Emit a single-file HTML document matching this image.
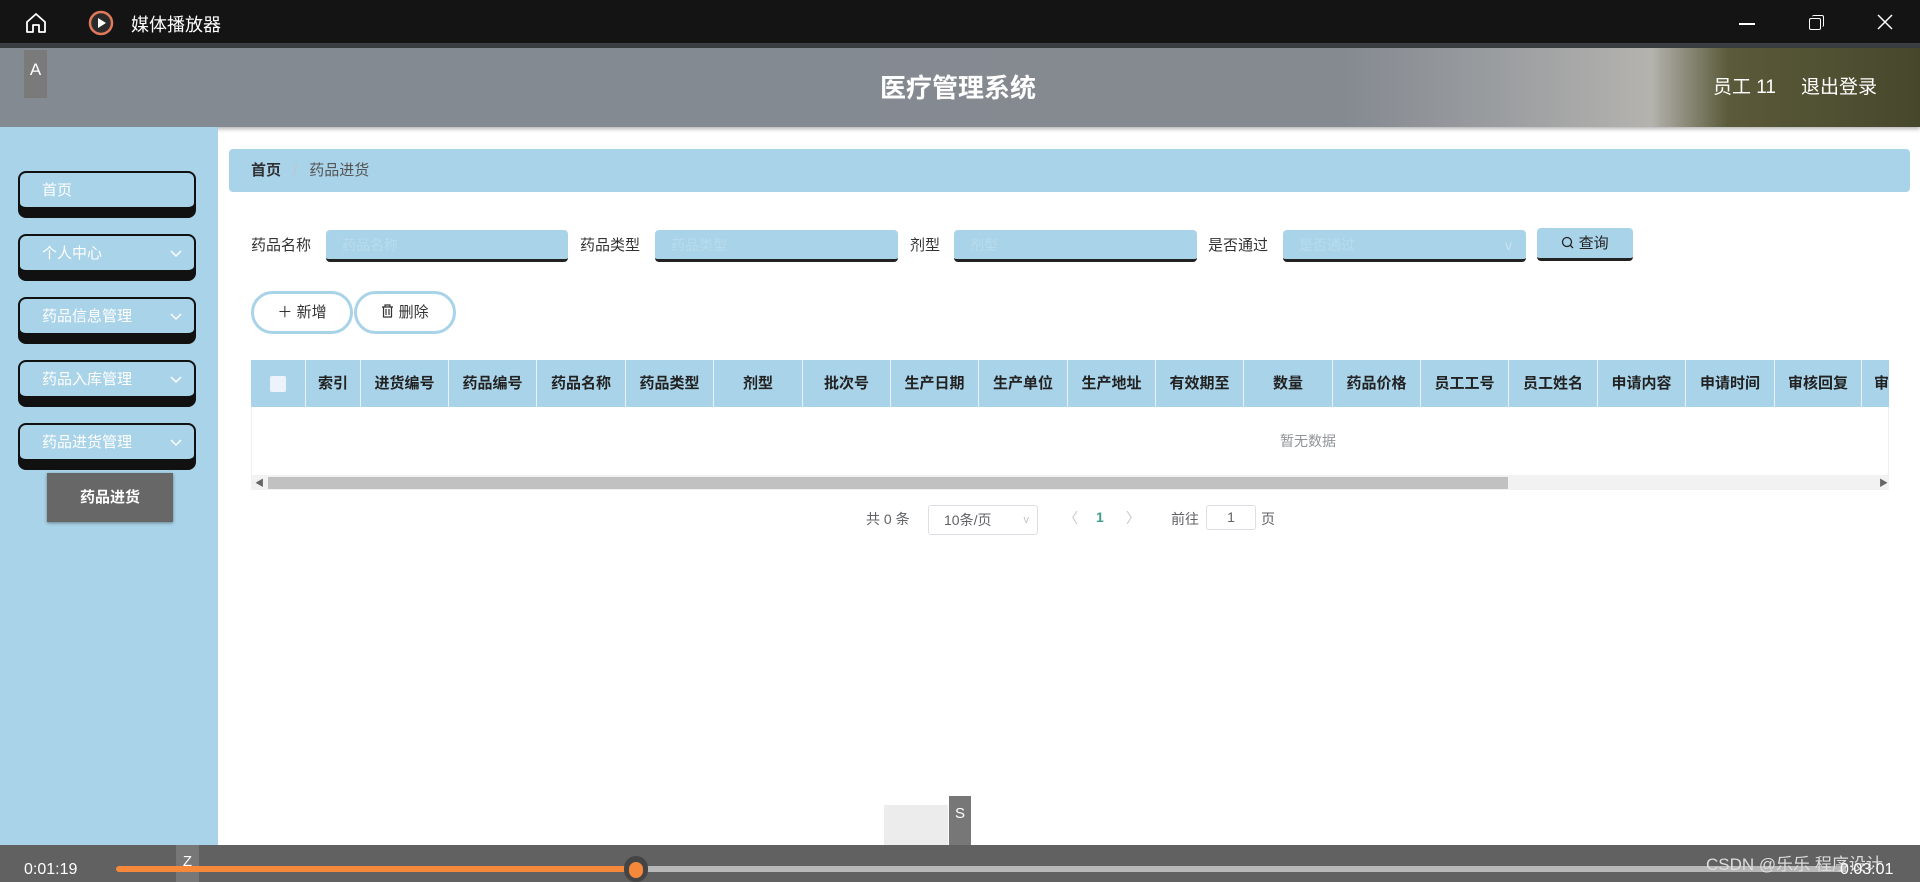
<!DOCTYPE html>
<html><head><meta charset="utf-8">
<style>
*{margin:0;padding:0;box-sizing:border-box}
body{width:1920px;height:882px;overflow:hidden;background:#fff;font-family:"Liberation Sans","Noto Sans CJK SC",sans-serif;position:relative}
.abs{position:absolute}
.tb{left:0;top:0;width:1920px;height:43px;background:#141414;color:#fff}
.strip{left:0;top:43px;width:1920px;height:5px;background:#3b3e42}
.hdr{left:0;top:48px;width:1920px;height:79px;background:linear-gradient(90deg,#848a92 0,#858a91 70%,#9a9da0 78%,#b4b3ae 86%,#5b5a3a 90%,#46482c 100%);box-shadow:0 2px 4px rgba(0,0,0,.3)}
.side{left:0;top:127px;width:218px;height:718px;background:#a9d3e8}
.mi{left:18px;width:178px;height:47px;border:2px solid #111;border-radius:8px;background:#111}
.mi div{height:36px;background:#a9d3e8;border-radius:6px;border-bottom:2px solid #111;color:#fff;font-size:15px;line-height:36px;padding-left:22px;position:relative}
.mi div svg{position:absolute;right:12px;top:14px}
.bc{left:229px;top:149px;width:1681px;height:43px;background:#a9d3e8;border-radius:4px;font-size:15px;line-height:43px;padding-left:22px;color:#555}
.lbl{font-size:15px;color:#333;top:234px}
.inp{top:230px;height:32px;background:#a9d3e8;border-radius:4px;border-bottom:3px solid #222;font-size:14px;color:#b8dcee;line-height:30px;padding-left:16px}
.btn{top:291px;height:43px;border:3px solid #a9d3e8;border-radius:22px;background:#fff;font-size:15px;color:#333;line-height:37px;text-align:center}
.th{top:360px;height:47px;background:#a9d3e8;font-size:15px;font-weight:bold;color:#222;line-height:47px;text-align:center;border-right:1px solid #e8f2f8}
.bar{left:0;top:845px;width:1920px;height:37px;background:#616161}
</style></head><body>
<div class="abs tb">
 <svg class="abs" style="left:24px;top:11px" width="24" height="24" viewBox="0 0 24 24"><path d="M3 11 L12 3 L21 11 V21 H15 V14 H9 V21 H3 Z" fill="none" stroke="#fff" stroke-width="1.8" stroke-linejoin="round"/></svg>
 <svg class="abs" style="left:88px;top:10px" width="26" height="26" viewBox="0 0 26 26"><circle cx="13" cy="13" r="11" fill="#2a2a2a" stroke="#e07a5a" stroke-width="2.5"/><path d="M10 8 L18 13 L10 18Z" fill="#fff"/></svg>
 <div class="abs" style="left:131px;top:11px;font-size:18px">媒体播放器</div>
 <div class="abs" style="left:1739px;top:23px;width:16px;height:1.5px;background:#fff"></div>
 <div class="abs" style="left:1809px;top:18px;width:12px;height:12px;border:1.5px solid #fff;border-radius:2px"></div>
 <div class="abs" style="left:1812px;top:15px;width:12px;height:12px;border-top:1.5px solid #fff;border-right:1.5px solid #fff;border-radius:2px"></div>
 <svg class="abs" style="left:1877px;top:14px" width="16" height="16" viewBox="0 0 16 16"><path d="M1 1L15 15M15 1L1 15" stroke="#fff" stroke-width="1.5"/></svg>
</div>
<div class="abs strip"></div>
<div class="abs hdr">
 <div class="abs" style="left:24px;top:2px;width:23px;height:48px;background:#7a7a7a;color:#fff;font-size:17px;text-align:center;line-height:40px">A</div>
 <div class="abs" style="left:880px;top:20px;font-size:26px;font-weight:bold;color:#fff">医疗管理系统</div>
 <div class="abs" style="left:1713px;top:24px;font-size:19px;color:#fff">员工 11</div>
 <div class="abs" style="left:1801px;top:24px;font-size:19px;color:#fff">退出登录</div>
</div>
<div class="abs side"></div>
<div class="abs mi" style="top:171px"><div>首页</div></div>
<div class="abs mi" style="top:234px"><div>个人中心<svg width="12" height="8" viewBox="0 0 12 8"><path d="M1 1L6 6L11 1" fill="none" stroke="#fff" stroke-width="1.5"/></svg></div></div>
<div class="abs mi" style="top:297px"><div>药品信息管理<svg width="12" height="8" viewBox="0 0 12 8"><path d="M1 1L6 6L11 1" fill="none" stroke="#fff" stroke-width="1.5"/></svg></div></div>
<div class="abs mi" style="top:360px"><div>药品入库管理<svg width="12" height="8" viewBox="0 0 12 8"><path d="M1 1L6 6L11 1" fill="none" stroke="#fff" stroke-width="1.5"/></svg></div></div>
<div class="abs mi" style="top:423px"><div>药品进货管理<svg width="12" height="8" viewBox="0 0 12 8"><path d="M1 1L6 6L11 1" fill="none" stroke="#fff" stroke-width="1.5"/></svg></div></div>
<div class="abs" style="left:47px;top:473px;width:126px;height:49px;background:#676767;color:#fff;font-size:15px;font-weight:bold;text-align:center;line-height:49px;box-shadow:0 1px 3px rgba(0,0,0,.4)">药品进货</div>

<div class="abs bc"><b style="color:#303133">首页</b><span style="color:#c0c4cc;margin:0 12px">/</span>药品进货</div>

<div class="abs lbl" style="left:251px">药品名称</div>
<div class="abs inp" style="left:326px;width:242px">药品名称</div>
<div class="abs lbl" style="left:580px">药品类型</div>
<div class="abs inp" style="left:655px;width:243px">药品类型</div>
<div class="abs lbl" style="left:910px">剂型</div>
<div class="abs inp" style="left:954px;width:243px">剂型</div>
<div class="abs lbl" style="left:1208px">是否通过</div>
<div class="abs inp" style="left:1283px;width:243px">是否通过<span style="position:absolute;right:14px;color:#c8e2ef">v</span></div>
<div class="abs" style="left:1537px;top:228px;width:96px;height:33px;background:#a9d3e8;border-radius:4px;border-bottom:3px solid #222;font-size:15px;line-height:31px;text-align:center;color:#222"><svg width="13" height="13" viewBox="0 0 13 13" style="vertical-align:-1px"><circle cx="6" cy="6" r="4.5" fill="none" stroke="#222" stroke-width="1.3"/><path d="M9.3 9.3L12 12" stroke="#222" stroke-width="1.3"/></svg> 查询</div>

<div class="abs btn" style="left:251px;width:102px">＋ 新增</div>
<div class="abs btn" style="left:354px;width:102px"><svg width="13" height="14" viewBox="0 0 13 14" style="vertical-align:-1px"><path d="M1 3H12M4 3V1H9V3M2.5 3V13H10.5V3M5 5V11M8 5V11" fill="none" stroke="#333" stroke-width="1.2"/></svg> 删除</div>

<div class="abs th" style="left:251px;width:55px"><span style="display:inline-block;width:16px;height:16px;background:#eef2fb;border-radius:2px;vertical-align:middle"></span></div>
<div class="abs th" style="left:306px;width:55px">索引</div>
<div class="abs th" style="left:361px;width:88px">进货编号</div>
<div class="abs th" style="left:449px;width:88px">药品编号</div>
<div class="abs th" style="left:537px;width:89px">药品名称</div>
<div class="abs th" style="left:626px;width:88px">药品类型</div>
<div class="abs th" style="left:714px;width:89px">剂型</div>
<div class="abs th" style="left:803px;width:88px">批次号</div>
<div class="abs th" style="left:891px;width:88px">生产日期</div>
<div class="abs th" style="left:979px;width:89px">生产单位</div>
<div class="abs th" style="left:1068px;width:88px">生产地址</div>
<div class="abs th" style="left:1156px;width:88px">有效期至</div>
<div class="abs th" style="left:1244px;width:89px">数量</div>
<div class="abs th" style="left:1333px;width:88px">药品价格</div>
<div class="abs th" style="left:1421px;width:88px">员工工号</div>
<div class="abs th" style="left:1509px;width:89px">员工姓名</div>
<div class="abs th" style="left:1598px;width:88px">申请内容</div>
<div class="abs th" style="left:1686px;width:89px">申请时间</div>
<div class="abs th" style="left:1775px;width:87px">审核回复</div>
<div class="abs th" style="left:1862px;width:27px;text-align:left;padding-left:12px;overflow:hidden;border-right:none">审核</div>
<div class="abs" style="left:251px;top:407px;width:1638px;height:68px;border-left:1px solid #ebeef5;border-right:1px solid #ebeef5"></div>
<div class="abs" style="left:1280px;top:407px;font-size:14px;color:#909399;line-height:68px">暂无数据</div>
<div class="abs" style="left:251px;top:475px;width:1638px;height:15px;background:#f2f2f2"></div>
<div class="abs" style="left:268px;top:477px;width:1240px;height:12px;background:#c1c1c1"></div>
<div class="abs" style="left:255px;top:476px;font-size:9px;color:#666">◀</div>
<div class="abs" style="left:1879px;top:476px;font-size:9px;color:#666">▶</div>

<div class="abs" style="left:866px;top:509px;font-size:14px;color:#606266">共 0 条</div>
<div class="abs" style="left:928px;top:505px;width:110px;height:30px;border:1px solid #dcdfe6;border-radius:3px;font-size:14px;color:#606266;line-height:28px;padding-left:15px">10条/页<span style="position:absolute;right:8px;color:#c0c4cc;font-size:11px">v</span></div>
<div class="abs" style="left:1064px;top:508px;font-size:14px;color:#c0c4cc">〈</div>
<div class="abs" style="left:1096px;top:509px;font-size:14px;color:#409e8a;font-weight:bold">1</div>
<div class="abs" style="left:1126px;top:508px;font-size:14px;color:#c0c4cc">〉</div>
<div class="abs" style="left:1171px;top:509px;font-size:14px;color:#606266">前往</div>
<div class="abs" style="left:1206px;top:505px;width:50px;height:25px;border:1px solid #dcdfe6;border-radius:3px;font-size:14px;text-align:center;line-height:23px;color:#606266">1</div>
<div class="abs" style="left:1261px;top:509px;font-size:14px;color:#606266">页</div>

<div class="abs" style="left:884px;top:805px;width:64px;height:40px;background:#ececec"></div>
<div class="abs" style="left:949px;top:796px;width:22px;height:49px;background:#777;color:#fff;font-size:15px;text-align:center;line-height:36px">S</div>
<div class="abs bar"></div>
<div class="abs" style="left:176px;top:845px;width:23px;height:37px;background:#777;color:#fff;font-size:15px;text-align:center;line-height:34px">Z</div>
<div class="abs" style="left:24px;top:861px;font-size:16px;color:#fff">0:01:19</div>
<div class="abs" style="left:116px;top:866px;width:520px;height:6px;background:#f5883a;border-radius:3px"></div>
<div class="abs" style="left:636px;top:866px;width:1210px;height:6px;background:#b8b8b8"></div>
<div class="abs" style="left:624px;top:856px;width:24px;height:26px;border-radius:12px;background:#444"></div>
<div class="abs" style="left:629px;top:862px;width:14px;height:16px;border-radius:7px;background:#f5883a"></div>
<div class="abs" style="left:1706px;top:850px;font-size:17px;color:#ddd">CSDN @乐乐 程序设计</div>
<div class="abs" style="left:1840px;top:861px;font-size:16px;color:#fff">0:03:01</div>
</body></html>
